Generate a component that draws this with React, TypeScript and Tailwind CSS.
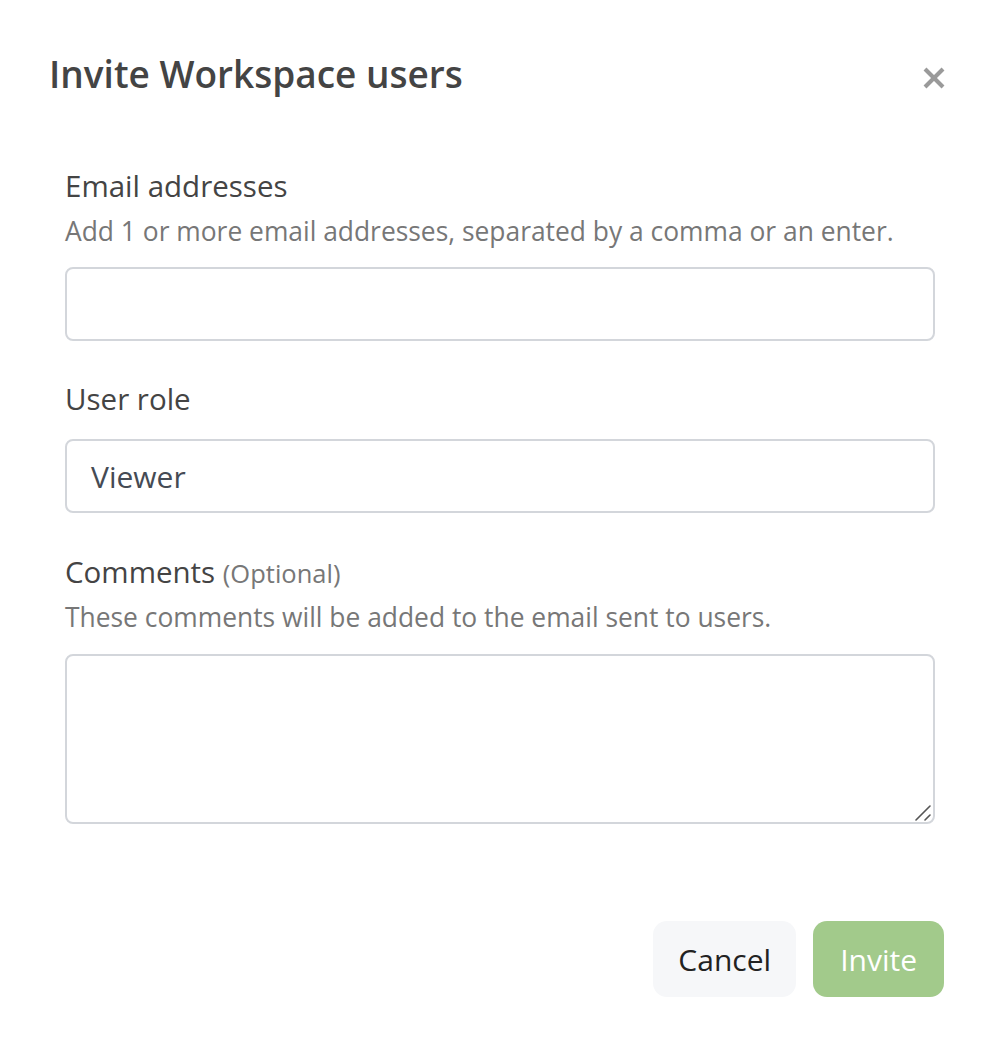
import { useState } from 'react';

const font = { fontFamily: '"Open Sans", "Noto Sans", sans-serif' };

function CloseIcon() {
  return (
    <svg width="24" height="22" viewBox="0 0 24 22" fill="none" stroke="#9a9a9a" strokeWidth="4">
      <line x1="3" y1="2" x2="21" y2="20" />
      <line x1="21" y1="2" x2="3" y2="20" />
    </svg>
  );
}

// Diagonal grip drawn in the textarea's corner
function ResizeGrip() {
  return (
    <svg width="16" height="16" viewBox="0 0 16 16" fill="none" stroke="#555" strokeWidth="1.6" strokeLinecap="round">
      <line x1="1" y1="15" x2="15" y2="1" />
      <line x1="10" y1="15" x2="15" y2="10" />
    </svg>
  );
}

export default function App() {
  const [emails, setEmails] = useState('');
  const [comments, setComments] = useState('');

  return (
    <div className="w-[1000px] h-[1052px] bg-white pl-[49px] pr-[56px] pt-[52px]" style={font}>
      {/* Header */}
      <div className="flex items-start justify-between h-[44px]">
        <h1 className="text-[37px] leading-[44px] font-semibold text-[#444]">Invite Workspace users</h1>
        <button className="mt-[15px] -mr-[2px] w-[24px] h-[22px] flex items-center justify-center">
          <CloseIcon />
        </button>
      </div>

      {/* Form */}
      <div className="pl-[16px] pr-[9px] mt-[72px]">
        <label className="block text-[29.5px] leading-[36px] text-[#444]">Email addresses</label>
        <p className="mt-[11px] text-[26.4px] leading-[32px] text-[#777]">
          Add 1 or more email addresses, separated by a comma or an enter.
        </p>
        <input
          value={emails}
          onChange={(e) => setEmails(e.target.value)}
          className="mt-[20px] block w-full h-[74px] rounded-[8px] border-2 border-[#d3d6db] px-[24px] text-[30px] text-[#454b54] outline-none"
        />

        <label className="block mt-[40px] text-[29.5px] leading-[36px] text-[#444]">User role</label>
        <div className="mt-[22px] flex items-center h-[74px] rounded-[8px] border-2 border-[#d3d6db] px-[24px] text-[30px] text-[#454b54]">
          Viewer
        </div>

        <label className="block mt-[41px] text-[29.5px] leading-[36px] text-[#444]">
          Comments <span className="text-[25.5px] text-[#777]">(Optional)</span>
        </label>
        <p className="mt-[10px] text-[26.4px] leading-[32px] text-[#777]">
          These comments will be added to the email sent to users.
        </p>
        <div className="relative mt-[21px]">
          <textarea
            value={comments}
            onChange={(e) => setComments(e.target.value)}
            className="block w-full h-[170px] resize-none rounded-[8px] border-2 border-[#d3d6db] px-[24px] py-[16px] text-[26px] outline-none"
          />
          <div className="absolute right-[4px] bottom-[3px] pointer-events-none">
            <ResizeGrip />
          </div>
        </div>
      </div>

      {/* Footer */}
      <div className="mt-[97px] flex justify-end gap-[17px]">
        <button className="h-[76px] px-[25px] rounded-[14px] bg-[#f6f7f9] text-[30px] text-[#222]">Cancel</button>
        <button className="h-[76px] px-[27px] rounded-[14px] bg-[#a2ca8b] text-[30px] text-white">Invite</button>
      </div>
    </div>
  );
}
